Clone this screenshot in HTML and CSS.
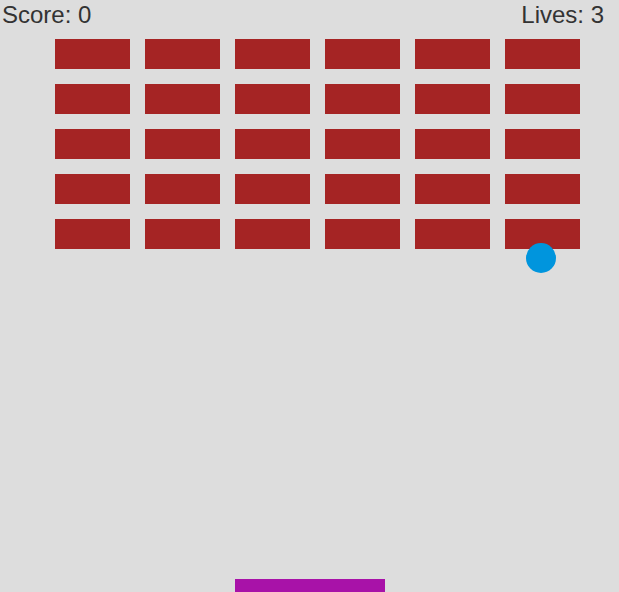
FILE: index.html
```html
<!DOCTYPE html>
<html>
<head>
<meta charset="utf-8">
<link rel="stylesheet" href="styles.css">
</head>
<body>
<div class="game">
  <div class="hud">
    <span class="score">Score: 0</span>
    <span class="lives">Lives: 3</span>
  </div>
  <div class="bricks">
    <div class="brick"></div><div class="brick"></div><div class="brick"></div><div class="brick"></div><div class="brick"></div><div class="brick"></div>
    <div class="brick"></div><div class="brick"></div><div class="brick"></div><div class="brick"></div><div class="brick"></div><div class="brick"></div>
    <div class="brick"></div><div class="brick"></div><div class="brick"></div><div class="brick"></div><div class="brick"></div><div class="brick"></div>
    <div class="brick"></div><div class="brick"></div><div class="brick"></div><div class="brick"></div><div class="brick"></div><div class="brick"></div>
    <div class="brick"></div><div class="brick"></div><div class="brick"></div><div class="brick"></div><div class="brick"></div><div class="brick"></div>
  </div>
  <div class="ball"></div>
  <div class="paddle"></div>
</div>
</body>
</html>
```
FILE: styles.css
```css
html, body {
  margin: 0;
  padding: 0;
  background: #dddddd;
  overflow: hidden;
}
.game {
  position: relative;
  height: 592px;
  display: flex;
  flex-direction: column;
}
.hud {
  display: flex;
  justify-content: space-between;
  padding: 1px 15px 0 2px;
  font-family: "Liberation Sans", Arial, sans-serif;
  font-size: 24px;
  line-height: 27px;
  color: #333333;
}
.bricks {
  display: grid;
  grid-template-columns: repeat(6, 75px);
  grid-auto-rows: 30px;
  gap: 15px;
  margin: 11px 0 0 55px;
}
.brick {
  background: #a52424;
}
.ball {
  position: absolute;
  left: 526px;
  top: 243px;
  width: 30px;
  height: 30px;
  border-radius: 50%;
  background: #0095dd;
}
.paddle {
  margin-top: auto;
  margin-left: 235px;
  width: 150px;
  height: 13px;
  background: #a812a8;
}
```
